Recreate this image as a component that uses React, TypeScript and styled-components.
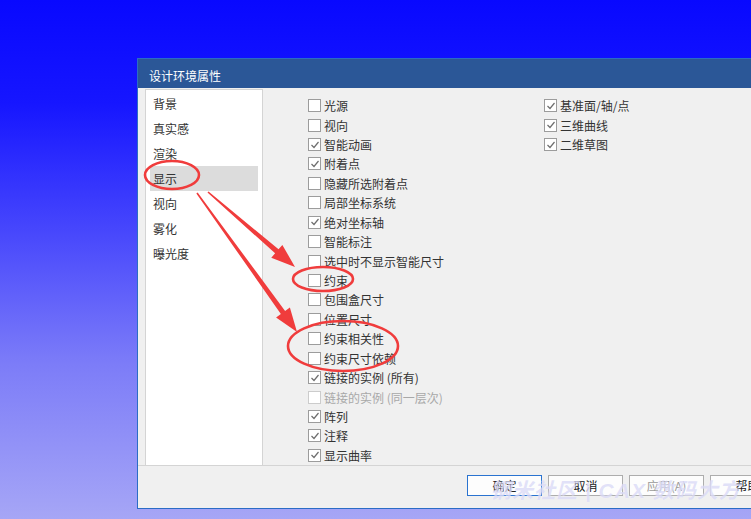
import React from "react";
import styled, { createGlobalStyle } from "styled-components";

interface OptionItem {
  label: string;
  checked: boolean;
  disabled?: boolean;
}

const navItems = ["背景", "真实感", "渲染", "显示", "视向", "雾化", "曝光度"];

const leftOptions: OptionItem[] = [
  { label: "光源", checked: false },
  { label: "视向", checked: false },
  { label: "智能动画", checked: true },
  { label: "附着点", checked: true },
  { label: "隐藏所选附着点", checked: false },
  { label: "局部坐标系统", checked: false },
  { label: "绝对坐标轴", checked: true },
  { label: "智能标注", checked: false },
  { label: "选中时不显示智能尺寸", checked: false },
  { label: "约束", checked: false },
  { label: "包围盒尺寸", checked: false },
  { label: "位置尺寸", checked: false },
  { label: "约束相关性", checked: false },
  { label: "约束尺寸依赖", checked: false },
  { label: "链接的实例 (所有)", checked: true },
  { label: "链接的实例 (同一层次)", checked: false, disabled: true },
  { label: "阵列", checked: true },
  { label: "注释", checked: true },
  { label: "显示曲率", checked: true },
];

const rightOptions: OptionItem[] = [
  { label: "基准面/轴/点", checked: true },
  { label: "三维曲线", checked: true },
  { label: "二维草图", checked: true },
];

// 箭头：细尾巴 + 三角头
const arrowPoints = (sx: number, sy: number, tx: number, ty: number) => {
  const len = Math.hypot(tx - sx, ty - sy);
  const dx = (tx - sx) / len;
  const dy = (ty - sy) / len;
  const nx = -dy;
  const ny = dx;
  const head = 24;
  const bx = tx - dx * head;
  const by = ty - dy * head;
  const p = (x: number, y: number, w: number) => `${x + nx * w},${y + ny * w}`;
  return [
    p(sx, sy, 0.8),
    p(bx, by, 2.6),
    p(bx, by, 8.5),
    `${tx},${ty}`,
    p(bx, by, -8.5),
    p(bx, by, -2.6),
    p(sx, sy, -0.8),
  ].join(" ");
};

const CheckRow: React.FC<{ item: OptionItem }> = ({ item }) => (
  <Row disabled={item.disabled}>
    <Box disabled={item.disabled}>
      {item.checked && (
        <svg width="10" height="10" viewBox="0 0 10 10">
          <polyline
            points="1.5,5 4,7.5 8.5,2"
            fill="none"
            stroke="#6e6e6e"
            strokeWidth="1.2"
          />
        </svg>
      )}
    </Box>
    {item.label}
  </Row>
);

const App: React.FC = () => {
  return (
    <>
      <GlobalStyle />
      <Desktop>
        <Dialog>
          <TitleBar>设计环境属性</TitleBar>
          <Body>
            <NavList>
              {navItems.map((n) => (
                <NavItem key={n} active={n === "显示"}>
                  {n}
                </NavItem>
              ))}
            </NavList>
            <Options>
              <Column>
                {leftOptions.map((o) => (
                  <CheckRow key={o.label} item={o} />
                ))}
              </Column>
              <Column>
                {rightOptions.map((o) => (
                  <CheckRow key={o.label} item={o} />
                ))}
              </Column>
            </Options>
          </Body>
          <Footer>
            <Button isDefault>确定</Button>
            <Button>取消</Button>
            <Button disabled>应用(A)</Button>
            <Button>帮助</Button>
          </Footer>
        </Dialog>

        {/* 水印 */}
        <Watermark>钢米社区 | CAX 数码大方</Watermark>

        {/* 红色标注 */}
        <Annotations width="751" height="519" viewBox="0 0 751 519">
          <g fill="none" stroke="#f03c3c" strokeWidth="2.6">
            <ellipse cx="172" cy="175" rx="27" ry="14" />
            <ellipse cx="323" cy="279" rx="30" ry="12" />
            <ellipse cx="343" cy="346" rx="55" ry="25" />
          </g>
          <g fill="#f03c3c">
            <polygon points={arrowPoints(208, 192, 295, 267)} />
            <polygon points={arrowPoints(197, 193, 297, 332)} />
          </g>
        </Annotations>
      </Desktop>
    </>
  );
};

export default App;

/** Styled Components */
const GlobalStyle = createGlobalStyle`
  html, body {
    margin: 0;
    padding: 0;
    overflow: hidden;
  }
  body {
    font-family: "Noto Sans CJK SC", "Microsoft YaHei", sans-serif;
  }
`;

const Desktop = styled.div`
  position: relative;
  width: 751px;
  height: 519px;
  overflow: hidden;
  box-sizing: border-box;
  padding: 58px 0 0 137px;
  background: linear-gradient(
    180deg,
    #0808ff 0%,
    #1616ff 20%,
    #4848fc 45%,
    #7c7cf8 70%,
    #a6a6f6 100%
  );
`;

const Dialog = styled.div`
  width: 660px;
  height: 451px;
  box-sizing: border-box;
  border: 1px solid #2b6cc6;
  border-right: none;
  background: #f0f0f0;
  display: flex;
  flex-direction: column;
`;

const TitleBar = styled.div`
  height: 29px;
  box-sizing: border-box;
  padding: 10px 0 0 11px;
  background: #2b5797;
  color: #ffffff;
  font-size: 12px;
  line-height: 14px;
`;

const Body = styled.div`
  display: flex;
  height: 378px;
  box-sizing: border-box;
  padding: 1px 0 0 7px;
  border-bottom: 1px solid #d4d4d4;
`;

const NavList = styled.div`
  width: 118px;
  box-sizing: border-box;
  padding-top: 1px;
  background: #ffffff;
  border: 1px solid #d4d4d4;
  border-bottom: none;
`;

const NavItem = styled.div<{ active?: boolean }>`
  height: 25px;
  margin: 0 4px;
  padding-left: 3px;
  display: flex;
  align-items: center;
  font-size: 12px;
  color: #333333;
  background: ${(p) => (p.active ? "#dcdcdc" : "transparent")};
`;

const Options = styled.div`
  display: flex;
  padding: 7px 0 0 45px;
`;

const Column = styled.div`
  width: 236px;
  display: flex;
  flex-direction: column;
`;

const Row = styled.div<{ disabled?: boolean }>`
  height: 19.56px;
  display: flex;
  align-items: center;
  gap: 3px;
  font-size: 12px;
  white-space: nowrap;
  color: ${(p) => (p.disabled ? "#a8a8a8" : "#333333")};
`;

const Box = styled.span<{ disabled?: boolean }>`
  width: 11px;
  height: 11px;
  flex: none;
  display: flex;
  align-items: center;
  justify-content: center;
  background: #ffffff;
  border: 1px solid ${(p) => (p.disabled ? "#cccccc" : "#9c9c9c")};
`;

const Footer = styled.div`
  display: flex;
  gap: 6px;
  padding: 9px 0 0 329px;
`;

const Button = styled.button<{ isDefault?: boolean }>`
  width: 75px;
  height: 21px;
  flex: none;
  padding: 0;
  font-family: inherit;
  font-size: 12px;
  white-space: nowrap;
  color: ${(p) => (p.disabled ? "#9a9a9a" : "#222222")};
  background: #fdfdfd;
  border: 1px solid ${(p) => (p.isDefault ? "#2a73d0" : "#adadad")};
  border-radius: 0;
`;

const Watermark = styled.div`
  position: absolute;
  left: 490px;
  top: 474px;
  white-space: nowrap;
  font-family: "Liberation Sans", "Noto Sans CJK SC", sans-serif;
  font-size: 21px;
  font-weight: 700;
  font-style: italic;
  letter-spacing: 1px;
  color: rgba(185, 185, 240, 0.42);
  text-shadow: 0 0 1px rgba(255, 255, 255, 0.7);
  pointer-events: none;
`;

const Annotations = styled.svg`
  position: absolute;
  left: 0;
  top: 0;
  pointer-events: none;
`;
